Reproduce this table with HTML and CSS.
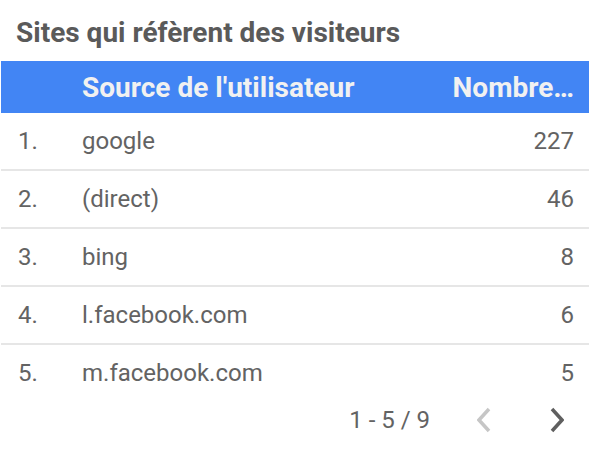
FILE: index.html
```html
<!DOCTYPE html>
<html lang="fr">
<head>
<meta charset="utf-8">
<link rel="stylesheet" href="styles.css">
</head>
<body>
<div class="card">
  <h1 class="title">Sites qui réfèrent des visiteurs</h1>
  <div class="table">
    <div class="row head">
      <span class="idx"></span>
      <span class="src">Source de l'utilisateur</span>
      <span class="val">Nombre…</span>
    </div>
    <div class="row"><span class="idx">1.</span><span class="src">google</span><span class="val">227</span></div>
    <div class="row"><span class="idx">2.</span><span class="src">(direct)</span><span class="val">46</span></div>
    <div class="row"><span class="idx">3.</span><span class="src">bing</span><span class="val">8</span></div>
    <div class="row"><span class="idx">4.</span><span class="src">l.facebook.com</span><span class="val">6</span></div>
    <div class="row last"><span class="idx">5.</span><span class="src">m.facebook.com</span><span class="val">5</span></div>
  </div>
  <div class="pager">
    <span class="range">1 - 5 / 9</span>
    <span class="btn prev"><svg width="14" height="26" viewBox="0 0 14 26"><path d="M12 2 L2 13 L12 24" fill="none" stroke="currentColor" stroke-width="3.5"/></svg></span>
    <span class="btn next"><svg width="14" height="26" viewBox="0 0 14 26"><path d="M2 2 L12 13 L2 24" fill="none" stroke="currentColor" stroke-width="3.5"/></svg></span>
  </div>
</div>
</body>
</html>
```

FILE: styles.css
```css
html, body {
  margin: 0;
  padding: 0;
  background: #ffffff;
}
.card {
  width: 590px;
  font-family: Roboto, "Liberation Sans", sans-serif;
}
.title {
  margin: 0;
  padding: 18px 16px 0 16px;
  height: 43px;
  box-sizing: border-box;
  font-size: 28px;
  font-weight: 700;
  line-height: 30px;
  color: #5a5a5a;
  white-space: nowrap;
}
.table {
  margin: 0 1px;
}
.row {
  display: grid;
  grid-template-columns: 64px 1fr auto;
  align-items: center;
  height: 58px;
  box-sizing: border-box;
  padding: 0 15px 0 17px;
  border-bottom: 2px solid #e6e6e6;
  font-size: 24px;
  color: #636363;
}
.row.head {
  height: 52px;
  margin-top: 18px;
  background: #4285f4;
  border-bottom: none;
  color: #f1f1f1;
  font-weight: 700;
  font-size: 28px;
}
.row.last {
  border-bottom: none;
  height: 56px;
}
.val {
  text-align: right;
}
.pager {
  display: flex;
  justify-content: flex-end;
  align-items: center;
  height: 38px;
  padding-right: 26px;
  font-size: 24px;
  color: #636363;
}
.range {
  margin-right: 47px;
}
.btn {
  display: flex;
  align-items: center;
}
.prev {
  color: #c6c6c6;
  margin-right: 59px;
}
.next {
  color: #5f5f5f;
}
```
